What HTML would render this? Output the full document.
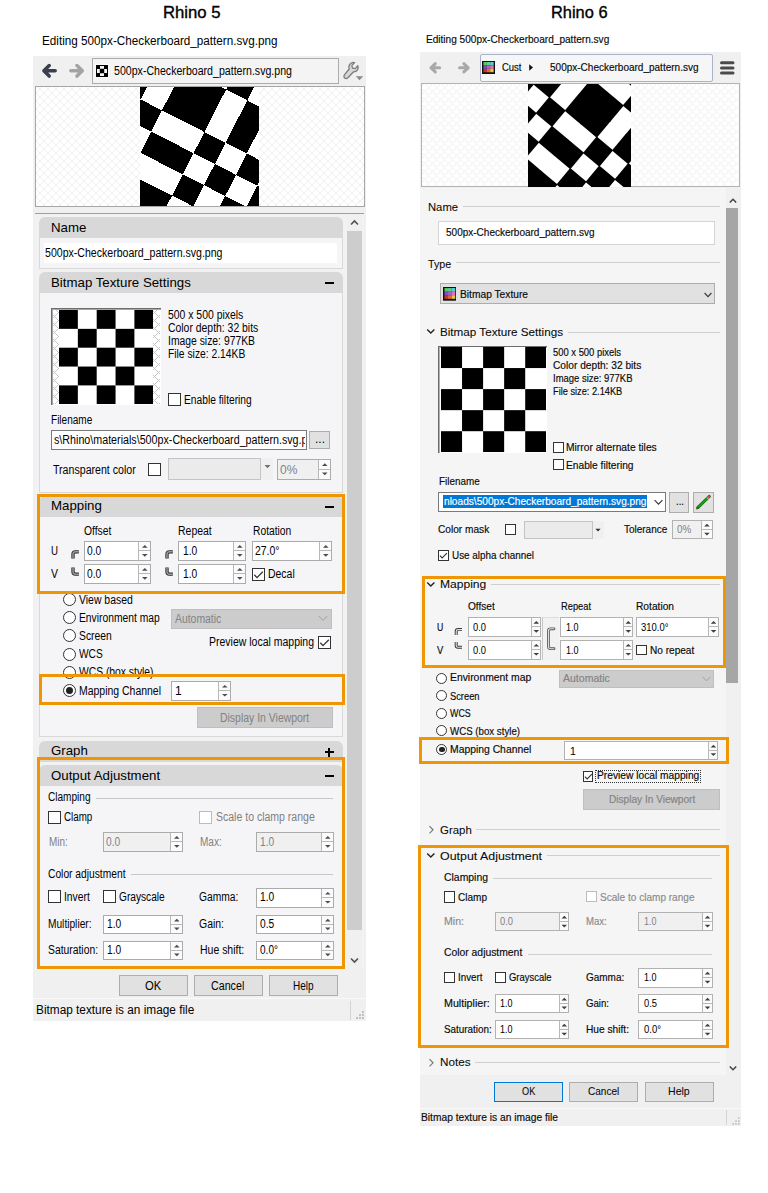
<!DOCTYPE html>
<html lang="en"><head><meta charset="utf-8"><title>Rhino 5 vs Rhino 6 texture mapping</title>
<style>
html,body{margin:0;padding:0;background:#fff}
#page{position:relative;width:768px;height:1193px;overflow:hidden;background:#fff;font-family:"Liberation Sans",sans-serif;color:#000}
.b{position:absolute;display:block}
.t{position:absolute;white-space:nowrap;line-height:1;transform-origin:0 0;display:block}
</style></head>
<body>
<div id="page">
<span class="t" style="left:163px;top:5px;font-size:16px;transform:scaleX(1.0426);-webkit-text-stroke:0.35px #000;">Rhino 5</span>
<span class="t" style="left:42px;top:35px;font-size:12px;transform:scaleX(0.9752);">Editing 500px-Checkerboard_pattern.svg.png</span>
<div class="b" style="left:33px;top:56px;width:333px;height:965px;background:#f0f0f0;"></div>
<div class="b" style="left:92px;top:58px;width:247px;height:26px;background:#f4f4f4;border:1px solid #ababab;box-sizing:border-box;"></div>
<svg class="b" style="left:41px;top:62px;" width="18" height="18" viewBox="0 0 18 18"><path d="M14.2 8.85H3.4M8.2 3.6L2.9 8.85L8.2 14.1" fill="none" stroke="#3b3f4c" stroke-width="3.5" stroke-linecap="round" stroke-linejoin="round"/></svg>
<svg class="b" style="left:68px;top:62px;" width="18" height="18" viewBox="0 0 18 18"><path d="M2.85 8.85H13.6M8.95 3.6L14.25 8.85L8.95 14.1" fill="none" stroke="#a3a3a3" stroke-width="3.5" stroke-linecap="round" stroke-linejoin="round"/></svg>
<svg class="b" style="left:95px;top:64px;" width="14" height="14" viewBox="0 0 14 14"><rect width="14" height="14" fill="#fbfbfb"/><rect x="1" y="1" width="12" height="12" fill="#000"/><path d="M5 2h4v2.8h-4zM2 5h2.8v4h-2.8zM9.2 5h2.8v4h-2.8zM5 9.2h4v2.8h-4z" fill="#f4f4f4"/></svg>
<span class="t" style="left:114px;top:65px;font-size:12px;transform:scaleX(0.8835);">500px-Checkerboard_pattern.svg.png</span>
<svg class="b" style="left:341px;top:60px;" width="24" height="22" viewBox="0 0 24 22"><path d="M3.2 15.2 L8.2 9.0 C7.2 6.0 8.6 3.2 12.0 2.4 L13.6 2.6 L10.8 5.6 L11.6 8.2 L14.2 8.6 L16.8 5.8 C18.0 8.6 16.2 11.6 12.6 11.8 L6.6 18.0 C4.6 19.4 2.0 17.4 3.2 15.2Z" fill="#d8d8d8" stroke="#7c7c7c" stroke-width="1.3" stroke-linejoin="round"/><path d="M14.8 16.2h7.4l-3.7 4z" fill="#8a8a8a"/></svg>
<div class="b" style="left:35px;top:86px;width:329.5px;height:121px;background:#fff;border:1px solid #a6a6a6;box-sizing:border-box;"></div>
<div class="b" style="left:36px;top:87px;width:327.5px;height:119px;background:repeating-linear-gradient(45deg,#efefef 0,#efefef 0.75px,transparent 0.75px,transparent 5.657px),repeating-linear-gradient(-45deg,#efefef 0,#efefef 0.75px,transparent 0.75px,transparent 5.657px),#fff;"></div>
<svg class="b" style="left:140px;top:87px;overflow:hidden;" width="119" height="119" viewBox="0 0 119 119"><rect width="119" height="119" fill="#fff"/><g transform="translate(0 119) rotate(27)" shape-rendering="crispEdges"><rect x="-71.4" y="-119" width="23.8" height="23.8"/><rect x="-47.6" y="-95.2" width="23.8" height="23.8"/><rect x="-47.6" y="-47.6" width="23.8" height="23.8"/><rect x="-23.8" y="-142.8" width="23.8" height="23.8"/><rect x="-23.8" y="-119" width="23.8" height="23.8"/><rect x="-23.8" y="-71.4" width="23.8" height="23.8"/><rect x="-23.8" y="-23.8" width="23.8" height="23.8"/><rect x="-23.8" y="0" width="23.8" height="23.8"/><rect x="0" y="-142.8" width="23.8" height="23.8"/><rect x="0" y="-119" width="23.8" height="23.8"/><rect x="0" y="-71.4" width="23.8" height="23.8"/><rect x="0" y="-23.8" width="23.8" height="23.8"/><rect x="0" y="0" width="23.8" height="23.8"/><rect x="23.8" y="-166.6" width="23.8" height="23.8"/><rect x="23.8" y="-95.2" width="23.8" height="23.8"/><rect x="23.8" y="-47.6" width="23.8" height="23.8"/><rect x="47.6" y="-190.4" width="23.8" height="23.8"/><rect x="47.6" y="-142.8" width="23.8" height="23.8"/><rect x="47.6" y="-119" width="23.8" height="23.8"/><rect x="47.6" y="-71.4" width="23.8" height="23.8"/><rect x="71.4" y="-95.2" width="23.8" height="23.8"/><rect x="71.4" y="-47.6" width="23.8" height="23.8"/><rect x="95.2" y="-71.4" width="23.8" height="23.8"/></g></svg>
<div class="b" style="left:35px;top:213px;width:329px;height:1px;background:#a0a0a0;"></div>
<div class="b" style="left:35px;top:214px;width:329px;height:755px;background:#f2f2f2;"></div>
<div class="b" style="left:347px;top:214px;width:15px;height:755px;background:#f0f0f0;"></div>
<div class="b" style="left:347px;top:231px;width:15px;height:698.5px;background:#cdcdcd;"></div>
<svg class="b" style="left:350px;top:219px;" width="9" height="7" viewBox="0 0 9 7"><path d="M1 5.5L4.5 2L8 5.5" fill="none" stroke="#505050" stroke-width="1.6"/></svg>
<svg class="b" style="left:350px;top:957px;" width="9" height="7" viewBox="0 0 9 7"><path d="M1 1.5L4.5 5L8 1.5" fill="none" stroke="#505050" stroke-width="1.6"/></svg>
<div class="b" style="left:39px;top:217px;width:304px;height:21px;background:#d8d8d8;border-radius:6px 6px 0 0;"></div>
<div class="b" style="left:39px;top:238px;width:304px;height:30.5px;background:#f5f5f8;border:1px solid #d9d9d9;border-top:none;box-sizing:border-box;"></div>
<span class="t" style="left:50.5px;top:221px;font-size:13px;transform:scaleX(1.0200);">Name</span>
<div class="b" style="left:44px;top:243px;width:293px;height:19.5px;background:#fff;"></div>
<span class="t" style="left:44.5px;top:247px;font-size:12px;transform:scaleX(0.8810);">500px-Checkerboard_pattern.svg.png</span>
<div class="b" style="left:39px;top:272px;width:304px;height:21px;background:#d8d8d8;border-radius:6px 6px 0 0;"></div>
<div class="b" style="left:39px;top:293px;width:304px;height:199.5px;background:#f5f5f8;border:1px solid #d9d9d9;border-top:none;box-sizing:border-box;"></div>
<span class="t" style="left:50.5px;top:276px;font-size:13px;transform:scaleX(1.0200);">Bitmap Texture Settings</span>
<div class="b" style="left:324.5px;top:282px;width:9.5px;height:2.2px;background:#000;"></div>
<div class="b" style="left:51px;top:308px;width:110px;height:97px;background:#fff;border-left:1px solid #6d6d6d;border-top:1px solid #6d6d6d;box-sizing:border-box;"></div>
<div class="b" style="left:52px;top:309px;width:109px;height:96px;background:#fff;border-left:1px solid #a8a8a8;border-top:1px solid #a8a8a8;box-sizing:border-box;"></div>
<div class="b" style="left:53px;top:310px;width:107px;height:94px;background:repeating-linear-gradient(45deg,#c8c8c8 0,#c8c8c8 0.9px,transparent 0.9px,transparent 5.657px),repeating-linear-gradient(-45deg,#c8c8c8 0,#c8c8c8 0.9px,transparent 0.9px,transparent 5.657px),#fff;"></div>
<svg class="b" style="left:59px;top:310px;" width="94.25" height="94.25" viewBox="0 0 94.25 94.25"><rect width="94.25" height="94.25" fill="#fff"/><rect x="0" y="0" width="18.85" height="18.85"/><rect x="0" y="37.7" width="18.85" height="18.85"/><rect x="0" y="75.4" width="18.85" height="18.85"/><rect x="18.85" y="18.85" width="18.85" height="18.85"/><rect x="18.85" y="56.55" width="18.85" height="18.85"/><rect x="37.7" y="0" width="18.85" height="18.85"/><rect x="37.7" y="37.7" width="18.85" height="18.85"/><rect x="37.7" y="75.4" width="18.85" height="18.85"/><rect x="56.55" y="18.85" width="18.85" height="18.85"/><rect x="56.55" y="56.55" width="18.85" height="18.85"/><rect x="75.4" y="0" width="18.85" height="18.85"/><rect x="75.4" y="37.7" width="18.85" height="18.85"/><rect x="75.4" y="75.4" width="18.85" height="18.85"/></svg>
<span class="t" style="left:168px;top:309px;font-size:12px;transform:scaleX(0.8677);">500 x 500 pixels</span>
<span class="t" style="left:168px;top:322px;font-size:12px;transform:scaleX(0.8673);">Color depth: 32 bits</span>
<span class="t" style="left:168px;top:335px;font-size:12px;transform:scaleX(0.8637);">Image size: 977KB</span>
<span class="t" style="left:168px;top:348px;font-size:12px;transform:scaleX(0.8579);">File size: 2.14KB</span>
<div class="b" style="left:168px;top:393px;width:13px;height:13px;background:#fff;border:1px solid #333;box-sizing:border-box;"></div>
<span class="t" style="left:184.25px;top:394px;font-size:12px;transform:scaleX(0.8534);">Enable filtering</span>
<span class="t" style="left:51.25px;top:414px;font-size:12px;transform:scaleX(0.8358);">Filename</span>
<div class="b" style="left:50.5px;top:430px;width:256.5px;height:19.5px;background:#fff;border:1px solid #7a7a7a;box-sizing:border-box;"></div>
<div class="b" style="left:51.5px;top:431px;width:253.2px;height:17.5px;overflow:hidden">
<span class="t" style="left:2.25px;top:3px;font-size:12px;transform:scaleX(0.8920);">s\Rhino\materials\500px-Checkerboard_pattern.svg.png</span>
</div>
<div class="b" style="left:309px;top:431px;width:21px;height:17.5px;background:#e1e1e1;border:1px solid #adadad;box-sizing:border-box;"></div>
<span class="t" style="left:315px;top:433px;font-size:12px;">...</span>
<span class="t" style="left:53.25px;top:464px;font-size:12px;transform:scaleX(0.8841);">Transparent color</span>
<div class="b" style="left:147.5px;top:463px;width:13px;height:13px;background:#fff;border:1px solid #333;box-sizing:border-box;"></div>
<div class="b" style="left:167.5px;top:458px;width:105px;height:21.5px;background:#f0f0f0;"></div>
<div class="b" style="left:167.5px;top:458px;width:93.5px;height:21.5px;background:#ebebeb;border:1px solid #c4c4c4;box-sizing:border-box;"></div>
<svg class="b" style="left:263.5px;top:464px;" width="7" height="5" viewBox="0 0 7 5"><path d="M0.5 1h6l-3 3.2z" fill="#707070"/></svg>
<div class="b" style="left:277px;top:459px;width:54px;height:20.5px;background:#f0f0f0;border:1px solid #ababab;box-sizing:border-box;"></div>
<div class="b" style="left:318px;top:460px;width:12px;height:18.5px;background:#fbfbfb;border-left:1px solid #b8b8b8;box-sizing:border-box;"></div>
<div class="b" style="left:319px;top:468.75px;width:11px;height:1px;background:#b8b8b8;"></div>
<svg class="b" style="left:318px;top:459px;" width="13" height="20.5" viewBox="0 0 13 20.5"><path d="M4 6.885 L6.8 4.185 L9.6 6.885Z M4 13.615 L6.8 16.315 L9.6 13.615Z" fill="#4c4c4c"/></svg>
<span class="t" style="left:280px;top:464px;font-size:12px;color:#80808c;">0%</span>
<div class="b" style="left:39px;top:496px;width:304px;height:21px;background:#d8d8d8;border-radius:6px 6px 0 0;"></div>
<div class="b" style="left:39px;top:517px;width:304px;height:220px;background:#f5f5f8;border:1px solid #d9d9d9;border-top:none;box-sizing:border-box;"></div>
<span class="t" style="left:50.5px;top:499px;font-size:13px;transform:scaleX(1.0200);">Mapping</span>
<div class="b" style="left:324.5px;top:506px;width:9.5px;height:2.2px;background:#000;"></div>
<span class="t" style="left:84.25px;top:525px;font-size:12px;transform:scaleX(0.8571);">Offset</span>
<span class="t" style="left:178.25px;top:525px;font-size:12px;transform:scaleX(0.8722);">Repeat</span>
<span class="t" style="left:252.5px;top:525px;font-size:12px;transform:scaleX(0.8558);">Rotation</span>
<span class="t" style="left:50.5px;top:545px;font-size:12px;transform:scaleX(0.8077);">U</span>
<span class="t" style="left:50.5px;top:568px;font-size:12px;transform:scaleX(0.8745);">V</span>
<svg class="b" style="left:71px;top:550px;" width="9" height="9" viewBox="0 0 9 9"><path d="M2 8.5V4.2Q2 1.8 4.4 1.8H7.8" fill="none" stroke="#2a2a2a" stroke-width="3.3"/><path d="M2 8.5V4.2Q2 1.8 4.4 1.8H7.8" fill="none" stroke="#9a9a9a" stroke-width="1.5"/></svg>
<svg class="b" style="left:71px;top:567px;" width="9" height="9" viewBox="0 0 9 9"><path d="M2 0.5V4.8Q2 7.2 4.4 7.2H7.8" fill="none" stroke="#2a2a2a" stroke-width="3.3"/><path d="M2 0.5V4.8Q2 7.2 4.4 7.2H7.8" fill="none" stroke="#9a9a9a" stroke-width="1.5"/></svg>
<svg class="b" style="left:165px;top:550px;" width="9" height="9" viewBox="0 0 9 9"><path d="M2 8.5V4.2Q2 1.8 4.4 1.8H7.8" fill="none" stroke="#2a2a2a" stroke-width="3.3"/><path d="M2 8.5V4.2Q2 1.8 4.4 1.8H7.8" fill="none" stroke="#9a9a9a" stroke-width="1.5"/></svg>
<svg class="b" style="left:165px;top:567px;" width="9" height="9" viewBox="0 0 9 9"><path d="M2 0.5V4.8Q2 7.2 4.4 7.2H7.8" fill="none" stroke="#2a2a2a" stroke-width="3.3"/><path d="M2 0.5V4.8Q2 7.2 4.4 7.2H7.8" fill="none" stroke="#9a9a9a" stroke-width="1.5"/></svg>
<div class="b" style="left:84px;top:541px;width:67px;height:19.75px;background:#fff;border:1px solid #ababab;box-sizing:border-box;"></div>
<div class="b" style="left:138px;top:542px;width:12px;height:17.75px;background:#fbfbfb;border-left:1px solid #b8b8b8;box-sizing:border-box;"></div>
<div class="b" style="left:139px;top:550.375px;width:11px;height:1px;background:#b8b8b8;"></div>
<svg class="b" style="left:138px;top:541px;" width="13" height="19.75" viewBox="0 0 13 19.75"><path d="M4 6.6825 L6.8 3.9825 L9.6 6.6825Z M4 13.0675 L6.8 15.7675 L9.6 13.0675Z" fill="#4c4c4c"/></svg>
<span class="t" style="left:87px;top:545px;font-size:12px;transform:scaleX(0.8512);">0.0</span>
<div class="b" style="left:84px;top:564px;width:67px;height:19.75px;background:#fff;border:1px solid #ababab;box-sizing:border-box;"></div>
<div class="b" style="left:138px;top:565px;width:12px;height:17.75px;background:#fbfbfb;border-left:1px solid #b8b8b8;box-sizing:border-box;"></div>
<div class="b" style="left:139px;top:573.375px;width:11px;height:1px;background:#b8b8b8;"></div>
<svg class="b" style="left:138px;top:564px;" width="13" height="19.75" viewBox="0 0 13 19.75"><path d="M4 6.6825 L6.8 3.9825 L9.6 6.6825Z M4 13.0675 L6.8 15.7675 L9.6 13.0675Z" fill="#4c4c4c"/></svg>
<span class="t" style="left:87px;top:568px;font-size:12px;transform:scaleX(0.8512);">0.0</span>
<div class="b" style="left:178px;top:541px;width:67.5px;height:19.75px;background:#fff;border:1px solid #ababab;box-sizing:border-box;"></div>
<div class="b" style="left:232.5px;top:542px;width:12px;height:17.75px;background:#fbfbfb;border-left:1px solid #b8b8b8;box-sizing:border-box;"></div>
<div class="b" style="left:233.5px;top:550.375px;width:11px;height:1px;background:#b8b8b8;"></div>
<svg class="b" style="left:232.5px;top:541px;" width="13" height="19.75" viewBox="0 0 13 19.75"><path d="M4 6.6825 L6.8 3.9825 L9.6 6.6825Z M4 13.0675 L6.8 15.7675 L9.6 13.0675Z" fill="#4c4c4c"/></svg>
<span class="t" style="left:182.5px;top:545px;font-size:12px;transform:scaleX(0.8512);">1.0</span>
<div class="b" style="left:178px;top:564px;width:67.5px;height:19.75px;background:#fff;border:1px solid #ababab;box-sizing:border-box;"></div>
<div class="b" style="left:232.5px;top:565px;width:12px;height:17.75px;background:#fbfbfb;border-left:1px solid #b8b8b8;box-sizing:border-box;"></div>
<div class="b" style="left:233.5px;top:573.375px;width:11px;height:1px;background:#b8b8b8;"></div>
<svg class="b" style="left:232.5px;top:564px;" width="13" height="19.75" viewBox="0 0 13 19.75"><path d="M4 6.6825 L6.8 3.9825 L9.6 6.6825Z M4 13.0675 L6.8 15.7675 L9.6 13.0675Z" fill="#4c4c4c"/></svg>
<span class="t" style="left:182.5px;top:568px;font-size:12px;transform:scaleX(0.8512);">1.0</span>
<div class="b" style="left:252px;top:541px;width:80px;height:19.75px;background:#fff;border:1px solid #ababab;box-sizing:border-box;"></div>
<div class="b" style="left:319px;top:542px;width:12px;height:17.75px;background:#fbfbfb;border-left:1px solid #b8b8b8;box-sizing:border-box;"></div>
<div class="b" style="left:320px;top:550.375px;width:11px;height:1px;background:#b8b8b8;"></div>
<svg class="b" style="left:319px;top:541px;" width="13" height="19.75" viewBox="0 0 13 19.75"><path d="M4 6.6825 L6.8 3.9825 L9.6 6.6825Z M4 13.0675 L6.8 15.7675 L9.6 13.0675Z" fill="#4c4c4c"/></svg>
<span class="t" style="left:255px;top:545px;font-size:12px;transform:scaleX(0.8702);">27.0°</span>
<div class="b" style="left:252px;top:568px;width:13px;height:13px;background:#fff;border:1px solid #333;box-sizing:border-box;"></div>
<svg class="b" style="left:252px;top:568px;" width="13" height="13" viewBox="0 0 13 13"><path d="M2.3 6.8 L5 9.6 L10.8 3.7" fill="none" stroke="#333" stroke-width="1.3"/></svg>
<span class="t" style="left:268.25px;top:568px;font-size:12px;transform:scaleX(0.8719);">Decal</span>
<div class="b" style="left:62.75px;top:593px;width:13px;height:13px;background:#fff;border:1px solid #333;border-radius:50%;box-sizing:border-box;"></div>
<span class="t" style="left:79.25px;top:594px;font-size:12px;transform:scaleX(0.8694);">View based</span>
<div class="b" style="left:62.75px;top:611px;width:13px;height:13px;background:#fff;border:1px solid #333;border-radius:50%;box-sizing:border-box;"></div>
<span class="t" style="left:79.25px;top:612px;font-size:12px;transform:scaleX(0.8586);">Environment map</span>
<div class="b" style="left:62.75px;top:629.25px;width:13px;height:13px;background:#fff;border:1px solid #333;border-radius:50%;box-sizing:border-box;"></div>
<span class="t" style="left:79.25px;top:630px;font-size:12px;transform:scaleX(0.8613);">Screen</span>
<div class="b" style="left:62.75px;top:647.75px;width:13px;height:13px;background:#fff;border:1px solid #333;border-radius:50%;box-sizing:border-box;"></div>
<span class="t" style="left:79.25px;top:648px;font-size:12px;transform:scaleX(0.8483);">WCS</span>
<div class="b" style="left:62.75px;top:665.5px;width:13px;height:13px;background:#fff;border:1px solid #333;border-radius:50%;box-sizing:border-box;"></div>
<span class="t" style="left:79.25px;top:666px;font-size:12px;transform:scaleX(0.8595);">WCS (box style)</span>
<div class="b" style="left:62.75px;top:684px;width:13px;height:13px;background:#fff;border:1px solid #333;border-radius:50%;box-sizing:border-box;"></div>
<div class="b" style="left:65.74px;top:686.99px;width:7.02px;height:7.02px;background:#222;border-radius:50%;"></div>
<span class="t" style="left:79.25px;top:685px;font-size:12px;transform:scaleX(0.8717);">Mapping Channel</span>
<div class="b" style="left:170.5px;top:608.5px;width:161.5px;height:20.5px;background:#cccccc;border:1px solid #bfbfbf;box-sizing:border-box;"></div>
<span class="t" style="left:175px;top:613px;font-size:12px;color:#838383;transform:scaleX(0.8668);">Automatic</span>
<svg class="b" style="left:318px;top:615px;" width="10" height="7" viewBox="0 0 10 7"><path d="M0.8 1L5 5.4L9.2 1" fill="none" stroke="#a0a0a0" stroke-width="1"/></svg>
<span class="t" style="left:209.25px;top:636px;font-size:12px;transform:scaleX(0.8745);">Preview local mapping</span>
<div class="b" style="left:318px;top:636px;width:13px;height:13px;background:#fff;border:1px solid #333;box-sizing:border-box;"></div>
<svg class="b" style="left:318px;top:636px;" width="13" height="13" viewBox="0 0 13 13"><path d="M2.3 6.8 L5 9.6 L10.8 3.7" fill="none" stroke="#333" stroke-width="1.3"/></svg>
<div class="b" style="left:170.5px;top:681px;width:60.5px;height:19.5px;background:#fff;border:1px solid #ababab;box-sizing:border-box;"></div>
<div class="b" style="left:218px;top:682px;width:12px;height:17.5px;background:#fbfbfb;border-left:1px solid #b8b8b8;box-sizing:border-box;"></div>
<div class="b" style="left:219px;top:690.25px;width:11px;height:1px;background:#b8b8b8;"></div>
<svg class="b" style="left:218px;top:681px;" width="13" height="19.5" viewBox="0 0 13 19.5"><path d="M4 6.615 L6.8 3.915 L9.6 6.615Z M4 12.885 L6.8 15.585 L9.6 12.885Z" fill="#4c4c4c"/></svg>
<span class="t" style="left:175px;top:685px;font-size:12px;">1</span>
<div class="b" style="left:197px;top:707.25px;width:136px;height:20.25px;background:#cccccc;border:1px solid #bfbfbf;box-sizing:border-box;"></div>
<span class="t" style="left:220px;top:712px;font-size:12px;color:#838383;transform:scaleX(0.8708);">Display In Viewport</span>
<div class="b" style="left:39px;top:741px;width:304px;height:21px;background:#d8d8d8;border-radius:6px 6px 0 0;"></div>
<span class="t" style="left:50.5px;top:744px;font-size:13px;transform:scaleX(1.0200);">Graph</span>
<div class="b" style="left:324.5px;top:751px;width:9.5px;height:2.2px;background:#000;"></div>
<div class="b" style="left:328.2px;top:747.5px;width:2.2px;height:9.5px;background:#000;"></div>
<div class="b" style="left:39px;top:764.5px;width:304px;height:21.5px;background:#d8d8d8;border-radius:6px 6px 0 0;"></div>
<div class="b" style="left:39px;top:786px;width:304px;height:182px;background:#f5f5f8;border:1px solid #d9d9d9;border-top:none;box-sizing:border-box;"></div>
<span class="t" style="left:50.5px;top:769px;font-size:13px;transform:scaleX(1.0200);">Output Adjustment</span>
<div class="b" style="left:324.5px;top:774.75px;width:9.5px;height:2.2px;background:#000;"></div>
<span class="t" style="left:47.5px;top:791px;font-size:12px;transform:scaleX(0.8384);">Clamping</span>
<div class="b" style="left:96.25px;top:797.5px;width:236.25px;height:1px;background:#c8c8c8;"></div>
<div class="b" style="left:48px;top:810.5px;width:13px;height:13px;background:#fff;border:1px solid #333;box-sizing:border-box;"></div>
<span class="t" style="left:63.75px;top:811px;font-size:12px;transform:scaleX(0.8147);">Clamp</span>
<div class="b" style="left:199px;top:810.5px;width:13px;height:13px;background:#fff;border:1px solid #bcbcbc;box-sizing:border-box;"></div>
<span class="t" style="left:215.5px;top:811px;font-size:12px;color:#808080;transform:scaleX(0.8760);">Scale to clamp range</span>
<span class="t" style="left:48.75px;top:836px;font-size:12px;color:#808080;transform:scaleX(0.8271);">Min:</span>
<div class="b" style="left:103px;top:832px;width:80px;height:19.75px;background:#f0f0f0;border:1px solid #ababab;box-sizing:border-box;"></div>
<div class="b" style="left:170px;top:833px;width:12px;height:17.75px;background:#fbfbfb;border-left:1px solid #b8b8b8;box-sizing:border-box;"></div>
<div class="b" style="left:171px;top:841.375px;width:11px;height:1px;background:#b8b8b8;"></div>
<svg class="b" style="left:170px;top:832px;" width="13" height="19.75" viewBox="0 0 13 19.75"><path d="M4 6.6825 L6.8 3.9825 L9.6 6.6825Z M4 13.0675 L6.8 15.7675 L9.6 13.0675Z" fill="#4c4c4c"/></svg>
<span class="t" style="left:106px;top:836px;font-size:12px;color:#80808c;transform:scaleX(0.8512);">0.0</span>
<span class="t" style="left:199.5px;top:836px;font-size:12px;color:#808080;transform:scaleX(0.8364);">Max:</span>
<div class="b" style="left:256px;top:832px;width:78px;height:19.75px;background:#f0f0f0;border:1px solid #ababab;box-sizing:border-box;"></div>
<div class="b" style="left:321px;top:833px;width:12px;height:17.75px;background:#fbfbfb;border-left:1px solid #b8b8b8;box-sizing:border-box;"></div>
<div class="b" style="left:322px;top:841.375px;width:11px;height:1px;background:#b8b8b8;"></div>
<svg class="b" style="left:321px;top:832px;" width="13" height="19.75" viewBox="0 0 13 19.75"><path d="M4 6.6825 L6.8 3.9825 L9.6 6.6825Z M4 13.0675 L6.8 15.7675 L9.6 13.0675Z" fill="#4c4c4c"/></svg>
<span class="t" style="left:259.5px;top:836px;font-size:12px;color:#80808c;transform:scaleX(0.8512);">1.0</span>
<span class="t" style="left:47.5px;top:868px;font-size:12px;transform:scaleX(0.8544);">Color adjustment</span>
<div class="b" style="left:131.25px;top:874px;width:201.25px;height:1px;background:#c8c8c8;"></div>
<div class="b" style="left:48px;top:890px;width:13px;height:13px;background:#fff;border:1px solid #333;box-sizing:border-box;"></div>
<span class="t" style="left:64.25px;top:891px;font-size:12px;transform:scaleX(0.8580);">Invert</span>
<div class="b" style="left:103px;top:890px;width:13px;height:13px;background:#fff;border:1px solid #333;box-sizing:border-box;"></div>
<span class="t" style="left:119.25px;top:891px;font-size:12px;transform:scaleX(0.8469);">Grayscale</span>
<span class="t" style="left:198.75px;top:891px;font-size:12px;transform:scaleX(0.8531);">Gamma:</span>
<div class="b" style="left:256px;top:888px;width:78px;height:19.5px;background:#fff;border:1px solid #ababab;box-sizing:border-box;"></div>
<div class="b" style="left:321px;top:889px;width:12px;height:17.5px;background:#fbfbfb;border-left:1px solid #b8b8b8;box-sizing:border-box;"></div>
<div class="b" style="left:322px;top:897.25px;width:11px;height:1px;background:#b8b8b8;"></div>
<svg class="b" style="left:321px;top:888px;" width="13" height="19.5" viewBox="0 0 13 19.5"><path d="M4 6.615 L6.8 3.915 L9.6 6.615Z M4 12.885 L6.8 15.585 L9.6 12.885Z" fill="#4c4c4c"/></svg>
<span class="t" style="left:259.5px;top:891px;font-size:12px;transform:scaleX(0.8512);">1.0</span>
<span class="t" style="left:48.25px;top:918px;font-size:12px;transform:scaleX(0.8472);">Multiplier:</span>
<div class="b" style="left:103px;top:914.5px;width:80px;height:19px;background:#fff;border:1px solid #ababab;box-sizing:border-box;"></div>
<div class="b" style="left:170px;top:915.5px;width:12px;height:17px;background:#fbfbfb;border-left:1px solid #b8b8b8;box-sizing:border-box;"></div>
<div class="b" style="left:171px;top:923.5px;width:11px;height:1px;background:#b8b8b8;"></div>
<svg class="b" style="left:170px;top:914.5px;" width="13" height="19" viewBox="0 0 13 19"><path d="M4 6.48 L6.8 3.78 L9.6 6.48Z M4 12.52 L6.8 15.22 L9.6 12.52Z" fill="#4c4c4c"/></svg>
<span class="t" style="left:106.5px;top:918px;font-size:12px;transform:scaleX(0.8512);">1.0</span>
<span class="t" style="left:198.75px;top:918px;font-size:12px;transform:scaleX(0.8716);">Gain:</span>
<div class="b" style="left:256px;top:914.5px;width:78px;height:19px;background:#fff;border:1px solid #ababab;box-sizing:border-box;"></div>
<div class="b" style="left:321px;top:915.5px;width:12px;height:17px;background:#fbfbfb;border-left:1px solid #b8b8b8;box-sizing:border-box;"></div>
<div class="b" style="left:322px;top:923.5px;width:11px;height:1px;background:#b8b8b8;"></div>
<svg class="b" style="left:321px;top:914.5px;" width="13" height="19" viewBox="0 0 13 19"><path d="M4 6.48 L6.8 3.78 L9.6 6.48Z M4 12.52 L6.8 15.22 L9.6 12.52Z" fill="#4c4c4c"/></svg>
<span class="t" style="left:259.5px;top:918px;font-size:12px;transform:scaleX(0.8512);">0.5</span>
<span class="t" style="left:48.25px;top:944px;font-size:12px;transform:scaleX(0.8615);">Saturation:</span>
<div class="b" style="left:103px;top:940.5px;width:80px;height:19px;background:#fff;border:1px solid #ababab;box-sizing:border-box;"></div>
<div class="b" style="left:170px;top:941.5px;width:12px;height:17px;background:#fbfbfb;border-left:1px solid #b8b8b8;box-sizing:border-box;"></div>
<div class="b" style="left:171px;top:949.5px;width:11px;height:1px;background:#b8b8b8;"></div>
<svg class="b" style="left:170px;top:940.5px;" width="13" height="19" viewBox="0 0 13 19"><path d="M4 6.48 L6.8 3.78 L9.6 6.48Z M4 12.52 L6.8 15.22 L9.6 12.52Z" fill="#4c4c4c"/></svg>
<span class="t" style="left:106.5px;top:944px;font-size:12px;transform:scaleX(0.8512);">1.0</span>
<span class="t" style="left:199.5px;top:944px;font-size:12px;transform:scaleX(0.8730);">Hue shift:</span>
<div class="b" style="left:256px;top:940.5px;width:78px;height:19px;background:#fff;border:1px solid #ababab;box-sizing:border-box;"></div>
<div class="b" style="left:321px;top:941.5px;width:12px;height:17px;background:#fbfbfb;border-left:1px solid #b8b8b8;box-sizing:border-box;"></div>
<div class="b" style="left:322px;top:949.5px;width:11px;height:1px;background:#b8b8b8;"></div>
<svg class="b" style="left:321px;top:940.5px;" width="13" height="19" viewBox="0 0 13 19"><path d="M4 6.48 L6.8 3.78 L9.6 6.48Z M4 12.52 L6.8 15.22 L9.6 12.52Z" fill="#4c4c4c"/></svg>
<span class="t" style="left:259.5px;top:944px;font-size:12px;transform:scaleX(0.8380);">0.0°</span>
<div class="b" style="left:37px;top:494.25px;width:308px;height:99.5px;border:3px solid #ef9605;box-sizing:border-box;"></div>
<div class="b" style="left:39px;top:674px;width:306px;height:31px;border:3px solid #ef9605;box-sizing:border-box;"></div>
<div class="b" style="left:37px;top:757px;width:308px;height:212px;border:3px solid #ef9605;box-sizing:border-box;"></div>
<div class="b" style="left:119px;top:975px;width:68.5px;height:20.5px;background:#e1e1e1;border:1px solid #adadad;box-sizing:border-box;"></div>
<span class="t" style="left:145px;top:980px;font-size:12px;transform:scaleX(0.9372);">OK</span>
<div class="b" style="left:194px;top:975px;width:68.5px;height:20.5px;background:#e1e1e1;border:1px solid #adadad;box-sizing:border-box;"></div>
<span class="t" style="left:211.25px;top:980px;font-size:12px;transform:scaleX(0.8901);">Cancel</span>
<div class="b" style="left:269px;top:975px;width:69px;height:20.5px;background:#e1e1e1;border:1px solid #adadad;box-sizing:border-box;"></div>
<span class="t" style="left:292.5px;top:980px;font-size:12px;transform:scaleX(0.8306);">Help</span>
<div class="b" style="left:33px;top:998px;width:333px;height:1px;background:#fafafa;"></div>
<span class="t" style="left:35.5px;top:1004px;font-size:12px;transform:scaleX(0.9845);">Bitmap texture is an image file</span>
<div class="b" style="left:349.5px;top:1000.5px;width:1px;height:19px;background:#d4d4d4;"></div>
<svg class="b" style="left:355px;top:1010px;" width="10" height="10" viewBox="0 0 10 10"><path d="M7 1h2v2h-2zM7 4h2v2h-2zM4 4h2v2h-2zM7 7h2v2h-2zM4 7h2v2h-2zM1 7h2v2h-2z" fill="#c0c0c0"/></svg>
<span class="t" style="left:551.25px;top:5px;font-size:16px;transform:scaleX(1.0245);-webkit-text-stroke:0.35px #000;">Rhino 6</span>
<span class="t" style="left:425.75px;top:34px;font-size:10.5px;color:#0a0a0a;transform:scaleX(0.9601);-webkit-text-stroke:0.16px #0a0a0a;">Editing 500px-Checkerboard_pattern.svg</span>
<div class="b" style="left:420px;top:52px;width:321px;height:1074px;background:#f0f0f0;"></div>
<div class="b" style="left:480px;top:54px;width:232.75px;height:27.5px;background:#f6f6f6;border:1px solid #aab4c8;border-radius:2px;box-sizing:border-box;"></div>
<svg class="b" style="left:429px;top:62px;" width="13" height="12" viewBox="0 0 13 12"><path d="M10.6 5.8H2.4M6.3 1.7L2 5.8L6.3 9.9" fill="none" stroke="#a8a8a8" stroke-width="3" stroke-linecap="round" stroke-linejoin="round"/></svg>
<svg class="b" style="left:457.5px;top:62px;" width="13" height="12" viewBox="0 0 13 12"><path d="M1.6 5.8H9.8M5.9 1.7L10.2 5.8L5.9 9.9" fill="none" stroke="#a8a8a8" stroke-width="3" stroke-linecap="round" stroke-linejoin="round"/></svg>
<svg class="b" style="left:482px;top:61.25px;" width="13" height="13" viewBox="0 0 13 13"><rect width="13" height="13" fill="#111"/><rect x="1.4" y="1" width="3.45" height="3.45" fill="#56cc5a"/><rect x="4.8" y="1" width="3.45" height="3.45" fill="#58d48c"/><rect x="8.2" y="1" width="3.45" height="3.45" fill="#5ccfd0"/><rect x="1.4" y="4.4" width="3.45" height="3.45" fill="#7a52c4"/><rect x="4.8" y="4.4" width="3.45" height="3.45" fill="#a85fd2"/><rect x="8.2" y="4.4" width="3.45" height="3.45" fill="#e272c2"/><rect x="1.4" y="7.8" width="3.45" height="3.45" fill="#cf2f2f"/><rect x="4.8" y="7.8" width="3.45" height="3.45" fill="#e06c2c"/><rect x="8.2" y="7.8" width="3.45" height="3.45" fill="#e8c63c"/></svg>
<span class="t" style="left:501.75px;top:62px;font-size:10.5px;color:#0a0a0a;transform:scaleX(0.9032);-webkit-text-stroke:0.16px #0a0a0a;">Cust</span>
<svg class="b" style="left:528.8px;top:64px;" width="4.2" height="7" viewBox="0 0 4.2 7"><path d="M0.2 0.2L4 3.5L0.2 6.8Z" fill="#111"/></svg>
<span class="t" style="left:550px;top:62px;font-size:10.5px;color:#0a0a0a;transform:scaleX(0.9528);-webkit-text-stroke:0.16px #0a0a0a;">500px-Checkerboard_pattern.svg</span>
<svg class="b" style="left:719px;top:60px;" width="17" height="16" viewBox="0 0 17 16"><path d="M2.5 2.75H14M2.5 7.9H14M2.5 13H14" stroke="#4a4a4a" stroke-width="3" stroke-linecap="round" fill="none"/></svg>
<div class="b" style="left:420.5px;top:83px;width:319.5px;height:104.25px;background:#fff;border:1px solid #b4b4b4;box-sizing:border-box;"></div>
<div class="b" style="left:421.5px;top:84px;width:317.5px;height:102.25px;background:repeating-linear-gradient(45deg,#efefef 0,#efefef 0.75px,transparent 0.75px,transparent 5.657px),repeating-linear-gradient(-45deg,#efefef 0,#efefef 0.75px,transparent 0.75px,transparent 5.657px),#fff;"></div>
<svg class="b" style="left:528px;top:84px;overflow:hidden;" width="103" height="103" viewBox="0 0 103 103"><rect width="103" height="103" fill="#fff"/><g transform="translate(0 103) rotate(310)"><rect x="-21" y="-21" width="21.4" height="21.4"/><rect x="-21" y="-0.4" width="21.4" height="21.4"/><rect x="-0.4" y="-21" width="21.4" height="21.4"/><rect x="-0.4" y="-0.4" width="21.4" height="21.4"/><rect x="20.2" y="-41.6" width="21.4" height="21.4"/><rect x="20.2" y="20.2" width="21.4" height="21.4"/><rect x="40.8" y="-62.2" width="21.4" height="21.4"/><rect x="40.8" y="-21" width="21.4" height="21.4"/><rect x="40.8" y="-0.4" width="21.4" height="21.4"/><rect x="40.8" y="40.8" width="21.4" height="21.4"/><rect x="61.4" y="-82.8" width="21.4" height="21.4"/><rect x="61.4" y="-41.6" width="21.4" height="21.4"/><rect x="61.4" y="20.2" width="21.4" height="21.4"/><rect x="61.4" y="61.4" width="21.4" height="21.4"/><rect x="82" y="-62.2" width="21.4" height="21.4"/><rect x="82" y="-21" width="21.4" height="21.4"/><rect x="82" y="-0.4" width="21.4" height="21.4"/><rect x="82" y="40.8" width="21.4" height="21.4"/><rect x="102.6" y="-21" width="21.4" height="21.4"/><rect x="102.6" y="-0.4" width="21.4" height="21.4"/><rect x="102.6" y="40.8" width="21.4" height="21.4"/><rect x="123.2" y="20.2" width="21.4" height="21.4"/><rect x="143.8" y="-0.4" width="21.4" height="21.4"/></g></svg>
<div class="b" style="left:420px;top:188px;width:306px;height:887px;background:#f5f5f5;"></div>
<div class="b" style="left:726px;top:188px;width:14.5px;height:887px;background:#f0f0f0;"></div>
<div class="b" style="left:726.25px;top:208px;width:12px;height:475px;background:#a6a6a6;"></div>
<svg class="b" style="left:728.5px;top:197px;" width="8" height="7" viewBox="0 0 8 7"><path d="M0.8 5.5L4 2.2L7.2 5.5" fill="none" stroke="#404040" stroke-width="1.4"/></svg>
<svg class="b" style="left:728.5px;top:1065px;" width="8" height="7" viewBox="0 0 8 7"><path d="M0.8 1.5L4 4.8L7.2 1.5" fill="none" stroke="#404040" stroke-width="1.4"/></svg>
<span class="t" style="left:428px;top:202px;font-size:11.5px;color:#0a0a0a;transform:scaleX(0.9779);-webkit-text-stroke:0.08px #0a0a0a;">Name</span>
<div class="b" style="left:462.5px;top:205.5px;width:257.75px;height:1px;background:#cfcfcf;"></div>
<div class="b" style="left:438.25px;top:220.75px;width:276.5px;height:23.75px;background:#fff;border:1px solid #d4d4d4;box-sizing:border-box;"></div>
<span class="t" style="left:445.75px;top:227px;font-size:10.5px;color:#0a0a0a;transform:scaleX(0.9528);-webkit-text-stroke:0.16px #0a0a0a;">500px-Checkerboard_pattern.svg</span>
<span class="t" style="left:428px;top:259px;font-size:11.5px;color:#0a0a0a;transform:scaleX(0.9325);-webkit-text-stroke:0.08px #0a0a0a;">Type</span>
<div class="b" style="left:455.75px;top:262.25px;width:264.5px;height:1px;background:#cfcfcf;"></div>
<div class="b" style="left:440px;top:283.25px;width:274.75px;height:20.5px;background:#e1e1e1;border:1px solid #adadad;box-sizing:border-box;"></div>
<svg class="b" style="left:442.8px;top:287px;" width="13.7" height="13.7" viewBox="0 0 13 13"><rect width="13" height="13" fill="#111"/><rect x="1.4" y="1" width="3.45" height="3.45" fill="#56cc5a"/><rect x="4.8" y="1" width="3.45" height="3.45" fill="#58d48c"/><rect x="8.2" y="1" width="3.45" height="3.45" fill="#5ccfd0"/><rect x="1.4" y="4.4" width="3.45" height="3.45" fill="#7a52c4"/><rect x="4.8" y="4.4" width="3.45" height="3.45" fill="#a85fd2"/><rect x="8.2" y="4.4" width="3.45" height="3.45" fill="#e272c2"/><rect x="1.4" y="7.8" width="3.45" height="3.45" fill="#cf2f2f"/><rect x="4.8" y="7.8" width="3.45" height="3.45" fill="#e06c2c"/><rect x="8.2" y="7.8" width="3.45" height="3.45" fill="#e8c63c"/></svg>
<span class="t" style="left:460px;top:289px;font-size:10.5px;color:#0a0a0a;transform:scaleX(0.9736);-webkit-text-stroke:0.16px #0a0a0a;">Bitmap Texture</span>
<svg class="b" style="left:703.5px;top:291.5px;" width="8" height="6" viewBox="0 0 8 6"><path d="M0.6 1L4 4.6L7.4 1" fill="none" stroke="#333" stroke-width="1.1"/></svg>
<svg class="b" style="left:425.6px;top:328px;" width="10" height="7" viewBox="0 0 10 7"><path d="M1.2 1.5L4.8 5L8.4 1.5" fill="none" stroke="#222" stroke-width="1.4"/></svg>
<span class="t" style="left:440px;top:327px;font-size:11.5px;color:#0a0a0a;transform:scaleX(1.0145);-webkit-text-stroke:0.08px #0a0a0a;">Bitmap Texture Settings</span>
<div class="b" style="left:567.5px;top:331.5px;width:152.5px;height:1px;background:#cfcfcf;"></div>
<div class="b" style="left:438px;top:345.5px;width:108.5px;height:107.5px;background:#fff;border-left:1px solid #6d6d6d;border-top:1px solid #6d6d6d;box-sizing:border-box;"></div>
<div class="b" style="left:439px;top:346.5px;width:107.5px;height:106.5px;background:#fff;border-left:1px solid #b0b0b0;border-top:1px solid #b0b0b0;box-sizing:border-box;"></div>
<svg class="b" style="left:440.5px;top:347px;" width="105.25" height="105.25" viewBox="0 0 105.25 105.25"><rect width="105.25" height="105.25" fill="#fff"/><rect x="0" y="0" width="21.05" height="21.05"/><rect x="0" y="42.1" width="21.05" height="21.05"/><rect x="0" y="84.2" width="21.05" height="21.05"/><rect x="21.05" y="21.05" width="21.05" height="21.05"/><rect x="21.05" y="63.15" width="21.05" height="21.05"/><rect x="42.1" y="0" width="21.05" height="21.05"/><rect x="42.1" y="42.1" width="21.05" height="21.05"/><rect x="42.1" y="84.2" width="21.05" height="21.05"/><rect x="63.15" y="21.05" width="21.05" height="21.05"/><rect x="63.15" y="63.15" width="21.05" height="21.05"/><rect x="84.2" y="0" width="21.05" height="21.05"/><rect x="84.2" y="42.1" width="21.05" height="21.05"/><rect x="84.2" y="84.2" width="21.05" height="21.05"/></svg>
<span class="t" style="left:552.5px;top:347px;font-size:10.5px;color:#0a0a0a;transform:scaleX(0.8961);-webkit-text-stroke:0.16px #0a0a0a;">500 x 500 pixels</span>
<span class="t" style="left:552.5px;top:360px;font-size:10.5px;color:#0a0a0a;transform:scaleX(0.9692);-webkit-text-stroke:0.16px #0a0a0a;">Color depth: 32 bits</span>
<span class="t" style="left:552.5px;top:373px;font-size:10.5px;color:#0a0a0a;transform:scaleX(0.9020);-webkit-text-stroke:0.16px #0a0a0a;">Image size: 977KB</span>
<span class="t" style="left:552.5px;top:386px;font-size:10.5px;color:#0a0a0a;transform:scaleX(0.8789);-webkit-text-stroke:0.16px #0a0a0a;">File size: 2.14KB</span>
<div class="b" style="left:553px;top:442.25px;width:11px;height:11px;background:#fff;border:1px solid #333;box-sizing:border-box;"></div>
<span class="t" style="left:566.25px;top:442px;font-size:10.5px;color:#0a0a0a;transform:scaleX(0.9781);-webkit-text-stroke:0.16px #0a0a0a;">Mirror alternate tiles</span>
<div class="b" style="left:553px;top:459.25px;width:11px;height:11px;background:#fff;border:1px solid #333;box-sizing:border-box;"></div>
<span class="t" style="left:566.25px;top:460px;font-size:10.5px;color:#0a0a0a;transform:scaleX(0.9717);-webkit-text-stroke:0.16px #0a0a0a;">Enable filtering</span>
<span class="t" style="left:438.75px;top:476px;font-size:10.5px;color:#0a0a0a;transform:scaleX(0.9436);-webkit-text-stroke:0.16px #0a0a0a;">Filename</span>
<div class="b" style="left:437.5px;top:492px;width:228.25px;height:19.5px;background:#fff;border:1px solid #7a7a7a;box-sizing:border-box;"></div>
<div class="b" style="left:442.5px;top:494.5px;width:204.5px;height:13.5px;background:#0078d7;"></div>
<span class="t" style="left:443.5px;top:496px;font-size:10.5px;color:#fff;transform:scaleX(0.9636);-webkit-text-stroke:0.16px #fff;">nloads\500px-Checkerboard_pattern.svg.png</span>
<svg class="b" style="left:654px;top:499px;" width="9" height="7" viewBox="0 0 9 7"><path d="M0.6 1.2L4.5 5.2L8.4 1.2" fill="none" stroke="#333" stroke-width="1.1"/></svg>
<div class="b" style="left:669px;top:492.25px;width:20.25px;height:20.25px;background:#e1e1e1;border:1px solid #adadad;box-sizing:border-box;"></div>
<span class="t" style="left:675.5px;top:496px;font-size:10.5px;color:#0a0a0a;transform:scaleX(0.9142);-webkit-text-stroke:0.16px #0a0a0a;">...</span>
<div class="b" style="left:693.25px;top:492.25px;width:20.25px;height:20.25px;background:#e1e1e1;border:1px solid #adadad;box-sizing:border-box;"></div>
<svg class="b" style="left:695px;top:494px;" width="16" height="16" viewBox="0 0 16 16"><path d="M1.7 14.6L3.2 13.2" stroke="#8a6a30" stroke-width="1.8" stroke-linecap="round"/><path d="M3 13.4L14.2 2.5" stroke="#1d5c1d" stroke-width="3.1" stroke-linecap="round"/><path d="M3.1 13.3L12.2 4.45" stroke="#12a012" stroke-width="2.1"/><path d="M12.2 4.45L13.1 3.55" stroke="#e8e8e8" stroke-width="2.1"/><path d="M13.1 3.55L14.1 2.6" stroke="#e04a4a" stroke-width="2.1" stroke-linecap="round"/></svg>
<span class="t" style="left:438px;top:524px;font-size:10.5px;color:#0a0a0a;transform:scaleX(0.9652);-webkit-text-stroke:0.16px #0a0a0a;">Color mask</span>
<div class="b" style="left:505px;top:523.75px;width:11.25px;height:11.25px;background:#fff;border:1px solid #333;box-sizing:border-box;"></div>
<div class="b" style="left:523.75px;top:520.5px;width:80px;height:18.75px;background:#f0f0f0;"></div>
<div class="b" style="left:523.75px;top:520.5px;width:68.75px;height:18.75px;background:#ebebeb;border:1px solid #c4c4c4;box-sizing:border-box;"></div>
<svg class="b" style="left:595.25px;top:528px;" width="6" height="4" viewBox="0 0 6 4"><path d="M0.4 0.7H5.6L3 3.4Z" fill="#333"/></svg>
<span class="t" style="left:623.75px;top:524px;font-size:10.5px;color:#0a0a0a;transform:scaleX(0.9499);-webkit-text-stroke:0.16px #0a0a0a;">Tolerance</span>
<div class="b" style="left:672px;top:520px;width:40.5px;height:19.25px;background:#f0f0f0;border:1px solid #b2b2b2;box-sizing:border-box;"></div>
<div class="b" style="left:701.25px;top:521px;width:10.25px;height:17.25px;background:#fbfbfb;border-left:1px solid #b8b8b8;box-sizing:border-box;"></div>
<div class="b" style="left:702.25px;top:529.125px;width:9.25px;height:1px;background:#b8b8b8;"></div>
<svg class="b" style="left:701.25px;top:520px;" width="11.25" height="19.25" viewBox="0 0 11.25 19.25"><path d="M3.125 6.5475 L5.925 3.8475 L8.725 6.5475Z M3.125 12.7025 L5.925 15.4025 L8.725 12.7025Z" fill="#404040"/></svg>
<span class="t" style="left:677px;top:524px;font-size:10.5px;color:#80808c;transform:scaleX(0.9390);">0%</span>
<div class="b" style="left:438px;top:550px;width:10.75px;height:10.75px;background:#fff;border:1px solid #333;box-sizing:border-box;"></div>
<svg class="b" style="left:438px;top:550px;" width="10.75" height="10.75" viewBox="0 0 10.75 10.75"><path d="M1.90192 5.62308 L4.13462 7.93846 L8.93077 3.05962" fill="none" stroke="#333" stroke-width="1.075"/></svg>
<span class="t" style="left:451.75px;top:550px;font-size:10.5px;color:#0a0a0a;transform:scaleX(0.9427);-webkit-text-stroke:0.16px #0a0a0a;">Use alpha channel</span>
<svg class="b" style="left:425.6px;top:580.5px;" width="10" height="7" viewBox="0 0 10 7"><path d="M1.2 1.5L4.8 5L8.4 1.5" fill="none" stroke="#222" stroke-width="1.4"/></svg>
<span class="t" style="left:440px;top:579px;font-size:11.5px;color:#0a0a0a;transform:scaleX(1.0484);-webkit-text-stroke:0.08px #0a0a0a;">Mapping</span>
<div class="b" style="left:490.5px;top:584.25px;width:229.5px;height:1px;background:#cfcfcf;"></div>
<span class="t" style="left:468.25px;top:601px;font-size:10.5px;color:#0a0a0a;transform:scaleX(0.9616);-webkit-text-stroke:0.16px #0a0a0a;">Offset</span>
<span class="t" style="left:560.5px;top:601px;font-size:10.5px;color:#0a0a0a;transform:scaleX(0.8860);-webkit-text-stroke:0.16px #0a0a0a;">Repeat</span>
<span class="t" style="left:636.25px;top:601px;font-size:10.5px;color:#0a0a0a;transform:scaleX(0.9716);-webkit-text-stroke:0.16px #0a0a0a;">Rotation</span>
<span class="t" style="left:437px;top:622px;font-size:10.5px;color:#0a0a0a;transform:scaleX(0.8242);-webkit-text-stroke:0.16px #0a0a0a;">U</span>
<span class="t" style="left:437px;top:645px;font-size:10.5px;color:#0a0a0a;transform:scaleX(0.8924);-webkit-text-stroke:0.16px #0a0a0a;">V</span>
<svg class="b" style="left:454px;top:627px;" width="8" height="8" viewBox="0 0 8 8"><path d="M2.2 8V4.4Q2.2 2.6 4 2.6H8" fill="none" stroke="#3a3a3a" stroke-width="3"/><path d="M2.2 8V4.4Q2.2 2.6 4 2.6H8" fill="none" stroke="#e6e6e6" stroke-width="1.1"/></svg>
<svg class="b" style="left:454px;top:641px;" width="8" height="8" viewBox="0 0 8 8"><path d="M2.2 1V4.5Q2.2 6.3 4 6.3H8" fill="none" stroke="#3a3a3a" stroke-width="3"/><path d="M2.2 1V4.5Q2.2 6.3 4 6.3H8" fill="none" stroke="#e6e6e6" stroke-width="1.1"/></svg>
<div class="b" style="left:467.75px;top:617px;width:72.75px;height:19.75px;background:#fff;border:1px solid #b2b2b2;box-sizing:border-box;"></div>
<div class="b" style="left:530.5px;top:618px;width:9px;height:17.75px;background:#fbfbfb;border-left:1px solid #b8b8b8;box-sizing:border-box;"></div>
<div class="b" style="left:531.5px;top:626.375px;width:8px;height:1px;background:#b8b8b8;"></div>
<svg class="b" style="left:530.5px;top:617px;" width="10" height="19.75" viewBox="0 0 10 19.75"><path d="M2.5 6.6825 L5.3 3.9825 L8.1 6.6825Z M2.5 13.0675 L5.3 15.7675 L8.1 13.0675Z" fill="#404040"/></svg>
<span class="t" style="left:472.75px;top:622px;font-size:10.5px;transform:scaleX(0.8906);">0.0</span>
<div class="b" style="left:467.75px;top:640px;width:72.75px;height:19.5px;background:#fff;border:1px solid #b2b2b2;box-sizing:border-box;"></div>
<div class="b" style="left:530.5px;top:641px;width:9px;height:17.5px;background:#fbfbfb;border-left:1px solid #b8b8b8;box-sizing:border-box;"></div>
<div class="b" style="left:531.5px;top:649.25px;width:8px;height:1px;background:#b8b8b8;"></div>
<svg class="b" style="left:530.5px;top:640px;" width="10" height="19.5" viewBox="0 0 10 19.5"><path d="M2.5 6.615 L5.3 3.915 L8.1 6.615Z M2.5 12.885 L5.3 15.585 L8.1 12.885Z" fill="#404040"/></svg>
<span class="t" style="left:472.75px;top:645px;font-size:10.5px;transform:scaleX(0.8906);">0.0</span>
<div class="b" style="left:542.25px;top:617px;width:17px;height:43px;background:#f2f2f2;border-left:1px solid #c8c8c8;border-top:1px solid #dcdcdc;box-sizing:border-box;"></div>
<svg class="b" style="left:546px;top:626.5px;" width="10" height="23.5" viewBox="0 0 10 23.5"><path d="M8 1.8H4.6Q2.4 1.8 2.4 4V19.5Q2.4 21.7 4.6 21.7H8" fill="none" stroke="#555" stroke-width="2.8" stroke-linecap="round"/><path d="M8 1.8H4.6Q2.4 1.8 2.4 4V19.5Q2.4 21.7 4.6 21.7H8" fill="none" stroke="#e4e4e4" stroke-width="1.1" stroke-linecap="round"/></svg>
<div class="b" style="left:560px;top:617px;width:73.25px;height:19.75px;background:#fff;border:1px solid #b2b2b2;box-sizing:border-box;"></div>
<div class="b" style="left:623.25px;top:618px;width:9px;height:17.75px;background:#fbfbfb;border-left:1px solid #b8b8b8;box-sizing:border-box;"></div>
<div class="b" style="left:624.25px;top:626.375px;width:8px;height:1px;background:#b8b8b8;"></div>
<svg class="b" style="left:623.25px;top:617px;" width="10" height="19.75" viewBox="0 0 10 19.75"><path d="M2.5 6.6825 L5.3 3.9825 L8.1 6.6825Z M2.5 13.0675 L5.3 15.7675 L8.1 13.0675Z" fill="#404040"/></svg>
<span class="t" style="left:565.75px;top:622px;font-size:10.5px;transform:scaleX(0.8564);">1.0</span>
<div class="b" style="left:560px;top:640px;width:73.25px;height:19.5px;background:#fff;border:1px solid #b2b2b2;box-sizing:border-box;"></div>
<div class="b" style="left:623.25px;top:641px;width:9px;height:17.5px;background:#fbfbfb;border-left:1px solid #b8b8b8;box-sizing:border-box;"></div>
<div class="b" style="left:624.25px;top:649.25px;width:8px;height:1px;background:#b8b8b8;"></div>
<svg class="b" style="left:623.25px;top:640px;" width="10" height="19.5" viewBox="0 0 10 19.5"><path d="M2.5 6.615 L5.3 3.915 L8.1 6.615Z M2.5 12.885 L5.3 15.585 L8.1 12.885Z" fill="#404040"/></svg>
<span class="t" style="left:565.75px;top:645px;font-size:10.5px;transform:scaleX(0.8564);">1.0</span>
<div class="b" style="left:636.25px;top:617px;width:82.25px;height:19.75px;background:#fff;border:1px solid #b2b2b2;box-sizing:border-box;"></div>
<div class="b" style="left:708px;top:618px;width:9.5px;height:17.75px;background:#fbfbfb;border-left:1px solid #b8b8b8;box-sizing:border-box;"></div>
<div class="b" style="left:709px;top:626.375px;width:8.5px;height:1px;background:#b8b8b8;"></div>
<svg class="b" style="left:708px;top:617px;" width="10.5" height="19.75" viewBox="0 0 10.5 19.75"><path d="M2.75 6.6825 L5.55 3.9825 L8.35 6.6825Z M2.75 13.0675 L5.55 15.7675 L8.35 13.0675Z" fill="#404040"/></svg>
<span class="t" style="left:641.25px;top:622px;font-size:10.5px;transform:scaleX(0.9024);">310.0°</span>
<div class="b" style="left:636.25px;top:644.5px;width:10.75px;height:10.75px;background:#fff;border:1px solid #333;box-sizing:border-box;"></div>
<span class="t" style="left:650px;top:645px;font-size:10.5px;color:#0a0a0a;transform:scaleX(0.9596);-webkit-text-stroke:0.16px #0a0a0a;">No repeat</span>
<div class="b" style="left:436.25px;top:672.5px;width:11px;height:11px;background:#fff;border:1px solid #333;border-radius:50%;box-sizing:border-box;"></div>
<span class="t" style="left:450px;top:672px;font-size:10.5px;color:#0a0a0a;transform:scaleX(0.9874);-webkit-text-stroke:0.16px #0a0a0a;">Environment map</span>
<div class="b" style="left:436.25px;top:690.25px;width:11px;height:11px;background:#fff;border:1px solid #333;border-radius:50%;box-sizing:border-box;"></div>
<span class="t" style="left:450px;top:691px;font-size:10.5px;color:#0a0a0a;transform:scaleX(0.8867);-webkit-text-stroke:0.16px #0a0a0a;">Screen</span>
<div class="b" style="left:436.25px;top:707.5px;width:11px;height:11px;background:#fff;border:1px solid #333;border-radius:50%;box-sizing:border-box;"></div>
<span class="t" style="left:450px;top:708px;font-size:10.5px;color:#0a0a0a;transform:scaleX(0.8470);-webkit-text-stroke:0.16px #0a0a0a;">WCS</span>
<div class="b" style="left:436.25px;top:725.25px;width:11px;height:11px;background:#fff;border:1px solid #333;border-radius:50%;box-sizing:border-box;"></div>
<span class="t" style="left:450px;top:726px;font-size:10.5px;color:#0a0a0a;transform:scaleX(0.9229);-webkit-text-stroke:0.16px #0a0a0a;">WCS (box style)</span>
<div class="b" style="left:436.25px;top:744px;width:11px;height:11px;background:#fff;border:1px solid #333;border-radius:50%;box-sizing:border-box;"></div>
<div class="b" style="left:438.78px;top:746.53px;width:5.94px;height:5.94px;background:#222;border-radius:50%;"></div>
<span class="t" style="left:450px;top:744px;font-size:10.5px;color:#0a0a0a;transform:scaleX(0.9871);-webkit-text-stroke:0.16px #0a0a0a;">Mapping Channel</span>
<div class="b" style="left:558.75px;top:669.5px;width:155px;height:18.5px;background:#cccccc;border:1px solid #bfbfbf;box-sizing:border-box;"></div>
<span class="t" style="left:562.5px;top:673px;font-size:10.5px;color:#838383;transform:scaleX(1.0013);-webkit-text-stroke:0.16px #838383;">Automatic</span>
<svg class="b" style="left:702px;top:676px;" width="9" height="6" viewBox="0 0 9 6"><path d="M0.6 0.8L4.5 4.8L8.4 0.8" fill="none" stroke="#a0a0a0" stroke-width="1"/></svg>
<div class="b" style="left:564.25px;top:741.25px;width:154px;height:18.75px;background:#fff;border:1px solid #b2b2b2;box-sizing:border-box;"></div>
<div class="b" style="left:708px;top:742.25px;width:9.25px;height:16.75px;background:#fbfbfb;border-left:1px solid #b8b8b8;box-sizing:border-box;"></div>
<div class="b" style="left:709px;top:750.125px;width:8.25px;height:1px;background:#b8b8b8;"></div>
<svg class="b" style="left:708px;top:741.25px;" width="10.25" height="18.75" viewBox="0 0 10.25 18.75"><path d="M2.625 6.4125 L5.425 3.7125 L8.225 6.4125Z M2.625 12.3375 L5.425 15.0375 L8.225 12.3375Z" fill="#404040"/></svg>
<span class="t" style="left:570px;top:746px;font-size:10.5px;">1</span>
<div class="b" style="left:582.5px;top:771.25px;width:10.75px;height:10.75px;background:#fff;border:1px solid #333;box-sizing:border-box;"></div>
<svg class="b" style="left:582.5px;top:771.25px;" width="10.75" height="10.75" viewBox="0 0 10.75 10.75"><path d="M1.90192 5.62308 L4.13462 7.93846 L8.93077 3.05962" fill="none" stroke="#333" stroke-width="1.075"/></svg>
<span class="t" style="left:597px;top:770px;font-size:10.5px;color:#0a0a0a;transform:scaleX(0.9733);-webkit-text-stroke:0.16px #0a0a0a;">Preview local mapping</span>
<div class="b" style="left:595px;top:769.5px;width:105.5px;height:13px;border:1px dotted #333;box-sizing:border-box;"></div>
<div class="b" style="left:583.25px;top:789.25px;width:136.75px;height:20.25px;background:#cccccc;border:1px solid #bfbfbf;box-sizing:border-box;"></div>
<span class="t" style="left:608.75px;top:794px;font-size:10.5px;color:#838383;transform:scaleX(0.9617);-webkit-text-stroke:0.16px #838383;">Display In Viewport</span>
<svg class="b" style="left:427.5px;top:825px;" width="7" height="10" viewBox="0 0 7 10"><path d="M1.5 1.2L5 4.8L1.5 8.4" fill="none" stroke="#777" stroke-width="1.2"/></svg>
<span class="t" style="left:439.5px;top:825px;font-size:11.5px;color:#0a0a0a;transform:scaleX(0.9933);-webkit-text-stroke:0.08px #0a0a0a;">Graph</span>
<div class="b" style="left:476.25px;top:829.25px;width:243.75px;height:1px;background:#cfcfcf;"></div>
<svg class="b" style="left:425.6px;top:852px;" width="10" height="7" viewBox="0 0 10 7"><path d="M1.2 1.5L4.8 5L8.4 1.5" fill="none" stroke="#222" stroke-width="1.4"/></svg>
<span class="t" style="left:440px;top:851px;font-size:11.5px;color:#0a0a0a;transform:scaleX(1.0781);-webkit-text-stroke:0.08px #0a0a0a;">Output Adjustment</span>
<div class="b" style="left:547px;top:855.25px;width:173px;height:1px;background:#cfcfcf;"></div>
<span class="t" style="left:444.25px;top:872px;font-size:10.5px;color:#0a0a0a;transform:scaleX(0.9920);-webkit-text-stroke:0.16px #0a0a0a;">Clamping</span>
<div class="b" style="left:493.25px;top:877.75px;width:218.5px;height:1px;background:#cfcfcf;"></div>
<div class="b" style="left:443.75px;top:891.25px;width:11.25px;height:11.25px;background:#fff;border:1px solid #333;box-sizing:border-box;"></div>
<span class="t" style="left:458px;top:892px;font-size:10.5px;color:#0a0a0a;transform:scaleX(0.9558);-webkit-text-stroke:0.16px #0a0a0a;">Clamp</span>
<div class="b" style="left:586.25px;top:891.25px;width:10.75px;height:10.75px;background:#fff;border:1px solid #bcbcbc;box-sizing:border-box;"></div>
<span class="t" style="left:600px;top:892px;font-size:10.5px;color:#8a8a8a;transform:scaleX(0.9580);-webkit-text-stroke:0.16px #8a8a8a;">Scale to clamp range</span>
<span class="t" style="left:444.25px;top:916px;font-size:10.5px;color:#8a8a8a;transform:scaleX(1.0082);-webkit-text-stroke:0.16px #8a8a8a;">Min:</span>
<div class="b" style="left:494.5px;top:912px;width:74.75px;height:19.25px;background:#f0f0f0;border:1px solid #b2b2b2;box-sizing:border-box;"></div>
<div class="b" style="left:559.25px;top:913px;width:9px;height:17.25px;background:#fbfbfb;border-left:1px solid #b8b8b8;box-sizing:border-box;"></div>
<div class="b" style="left:560.25px;top:921.125px;width:8px;height:1px;background:#b8b8b8;"></div>
<svg class="b" style="left:559.25px;top:912px;" width="10" height="19.25" viewBox="0 0 10 19.25"><path d="M2.5 6.5475 L5.3 3.8475 L8.1 6.5475Z M2.5 12.7025 L5.3 15.4025 L8.1 12.7025Z" fill="#404040"/></svg>
<span class="t" style="left:500px;top:916px;font-size:10.5px;color:#80808c;transform:scaleX(0.8906);">0.0</span>
<span class="t" style="left:586.25px;top:916px;font-size:10.5px;color:#8a8a8a;transform:scaleX(0.9119);-webkit-text-stroke:0.16px #8a8a8a;">Max:</span>
<div class="b" style="left:638.25px;top:912px;width:74.25px;height:19.25px;background:#f0f0f0;border:1px solid #b2b2b2;box-sizing:border-box;"></div>
<div class="b" style="left:702px;top:913px;width:9.5px;height:17.25px;background:#fbfbfb;border-left:1px solid #b8b8b8;box-sizing:border-box;"></div>
<div class="b" style="left:703px;top:921.125px;width:8.5px;height:1px;background:#b8b8b8;"></div>
<svg class="b" style="left:702px;top:912px;" width="10.5" height="19.25" viewBox="0 0 10.5 19.25"><path d="M2.75 6.5475 L5.55 3.8475 L8.35 6.5475Z M2.75 12.7025 L5.55 15.4025 L8.35 12.7025Z" fill="#404040"/></svg>
<span class="t" style="left:643.75px;top:916px;font-size:10.5px;color:#80808c;transform:scaleX(0.8564);">1.0</span>
<span class="t" style="left:444.25px;top:947px;font-size:10.5px;color:#0a0a0a;transform:scaleX(0.9859);-webkit-text-stroke:0.16px #0a0a0a;">Color adjustment</span>
<div class="b" style="left:527.5px;top:953.5px;width:184.25px;height:1px;background:#cfcfcf;"></div>
<div class="b" style="left:443.75px;top:971.75px;width:11.25px;height:11.25px;background:#fff;border:1px solid #333;box-sizing:border-box;"></div>
<span class="t" style="left:458px;top:972px;font-size:10.5px;color:#0a0a0a;transform:scaleX(0.9330);-webkit-text-stroke:0.16px #0a0a0a;">Invert</span>
<div class="b" style="left:494.5px;top:971.75px;width:11px;height:11px;background:#fff;border:1px solid #333;box-sizing:border-box;"></div>
<span class="t" style="left:508.75px;top:972px;font-size:10.5px;color:#0a0a0a;transform:scaleX(0.8992);-webkit-text-stroke:0.16px #0a0a0a;">Grayscale</span>
<span class="t" style="left:586.25px;top:972px;font-size:10.5px;color:#0a0a0a;transform:scaleX(0.9501);-webkit-text-stroke:0.16px #0a0a0a;">Gamma:</span>
<div class="b" style="left:638.25px;top:968.25px;width:74.25px;height:19.25px;background:#fff;border:1px solid #b2b2b2;box-sizing:border-box;"></div>
<div class="b" style="left:702px;top:969.25px;width:9.5px;height:17.25px;background:#fbfbfb;border-left:1px solid #b8b8b8;box-sizing:border-box;"></div>
<div class="b" style="left:703px;top:977.375px;width:8.5px;height:1px;background:#b8b8b8;"></div>
<svg class="b" style="left:702px;top:968.25px;" width="10.5" height="19.25" viewBox="0 0 10.5 19.25"><path d="M2.75 6.5475 L5.55 3.8475 L8.35 6.5475Z M2.75 12.7025 L5.55 15.4025 L8.35 12.7025Z" fill="#404040"/></svg>
<span class="t" style="left:643.75px;top:972px;font-size:10.5px;transform:scaleX(0.8564);">1.0</span>
<span class="t" style="left:444.25px;top:998px;font-size:10.5px;color:#0a0a0a;transform:scaleX(1.0183);-webkit-text-stroke:0.16px #0a0a0a;">Multiplier:</span>
<div class="b" style="left:494.5px;top:994.25px;width:74.75px;height:19px;background:#fff;border:1px solid #b2b2b2;box-sizing:border-box;"></div>
<div class="b" style="left:559.25px;top:995.25px;width:9px;height:17px;background:#fbfbfb;border-left:1px solid #b8b8b8;box-sizing:border-box;"></div>
<div class="b" style="left:560.25px;top:1003.25px;width:8px;height:1px;background:#b8b8b8;"></div>
<svg class="b" style="left:559.25px;top:994.25px;" width="10" height="19" viewBox="0 0 10 19"><path d="M2.5 6.48 L5.3 3.78 L8.1 6.48Z M2.5 12.52 L5.3 15.22 L8.1 12.52Z" fill="#404040"/></svg>
<span class="t" style="left:500px;top:998px;font-size:10.5px;transform:scaleX(0.8564);">1.0</span>
<span class="t" style="left:586.25px;top:998px;font-size:10.5px;color:#0a0a0a;transform:scaleX(0.9165);-webkit-text-stroke:0.16px #0a0a0a;">Gain:</span>
<div class="b" style="left:638.25px;top:994.25px;width:74.25px;height:19px;background:#fff;border:1px solid #b2b2b2;box-sizing:border-box;"></div>
<div class="b" style="left:702px;top:995.25px;width:9.5px;height:17px;background:#fbfbfb;border-left:1px solid #b8b8b8;box-sizing:border-box;"></div>
<div class="b" style="left:703px;top:1003.25px;width:8.5px;height:1px;background:#b8b8b8;"></div>
<svg class="b" style="left:702px;top:994.25px;" width="10.5" height="19" viewBox="0 0 10.5 19"><path d="M2.75 6.48 L5.55 3.78 L8.35 6.48Z M2.75 12.52 L5.55 15.22 L8.35 12.52Z" fill="#404040"/></svg>
<span class="t" style="left:643.75px;top:998px;font-size:10.5px;transform:scaleX(0.8906);">0.5</span>
<span class="t" style="left:444.25px;top:1024px;font-size:10.5px;color:#0a0a0a;transform:scaleX(0.9403);-webkit-text-stroke:0.16px #0a0a0a;">Saturation:</span>
<div class="b" style="left:494.5px;top:1020px;width:74.75px;height:19.25px;background:#fff;border:1px solid #b2b2b2;box-sizing:border-box;"></div>
<div class="b" style="left:559.25px;top:1021px;width:9px;height:17.25px;background:#fbfbfb;border-left:1px solid #b8b8b8;box-sizing:border-box;"></div>
<div class="b" style="left:560.25px;top:1029.12px;width:8px;height:1px;background:#b8b8b8;"></div>
<svg class="b" style="left:559.25px;top:1020px;" width="10" height="19.25" viewBox="0 0 10 19.25"><path d="M2.5 6.5475 L5.3 3.8475 L8.1 6.5475Z M2.5 12.7025 L5.3 15.4025 L8.1 12.7025Z" fill="#404040"/></svg>
<span class="t" style="left:500px;top:1024px;font-size:10.5px;transform:scaleX(0.8564);">1.0</span>
<span class="t" style="left:586.25px;top:1024px;font-size:10.5px;color:#0a0a0a;transform:scaleX(0.9695);-webkit-text-stroke:0.16px #0a0a0a;">Hue shift:</span>
<div class="b" style="left:638.25px;top:1020px;width:74.25px;height:19.25px;background:#fff;border:1px solid #b2b2b2;box-sizing:border-box;"></div>
<div class="b" style="left:702px;top:1021px;width:9.5px;height:17.25px;background:#fbfbfb;border-left:1px solid #b8b8b8;box-sizing:border-box;"></div>
<div class="b" style="left:703px;top:1029.12px;width:8.5px;height:1px;background:#b8b8b8;"></div>
<svg class="b" style="left:702px;top:1020px;" width="10.5" height="19.25" viewBox="0 0 10.5 19.25"><path d="M2.75 6.5475 L5.55 3.8475 L8.35 6.5475Z M2.75 12.7025 L5.55 15.4025 L8.35 12.7025Z" fill="#404040"/></svg>
<span class="t" style="left:643.75px;top:1024px;font-size:10.5px;transform:scaleX(0.9045);">0.0°</span>
<svg class="b" style="left:427.5px;top:1057.5px;" width="7" height="10" viewBox="0 0 7 10"><path d="M1.5 1.2L5 4.8L1.5 8.4" fill="none" stroke="#777" stroke-width="1.2"/></svg>
<span class="t" style="left:439.5px;top:1057px;font-size:11.5px;color:#0a0a0a;transform:scaleX(1.0152);-webkit-text-stroke:0.08px #0a0a0a;">Notes</span>
<div class="b" style="left:474.5px;top:1062.25px;width:245.5px;height:1px;background:#cfcfcf;"></div>
<div class="b" style="left:422px;top:576px;width:304.25px;height:92px;border:3px solid #ef9605;box-sizing:border-box;"></div>
<div class="b" style="left:418.75px;top:737px;width:310.5px;height:27px;border:3px solid #ef9605;box-sizing:border-box;"></div>
<div class="b" style="left:418.25px;top:845px;width:311px;height:203px;border:3px solid #ef9605;box-sizing:border-box;"></div>
<div class="b" style="left:493.75px;top:1081.75px;width:68.75px;height:20.25px;background:#e1e1e1;border:1.6px solid #0078d7;box-sizing:border-box;"></div>
<span class="t" style="left:521.75px;top:1086px;font-size:11.5px;color:#0a0a0a;transform:scaleX(0.7974);-webkit-text-stroke:0.08px #0a0a0a;">OK</span>
<div class="b" style="left:568.75px;top:1081.75px;width:68.75px;height:20.25px;background:#e1e1e1;border:1px solid #adadad;box-sizing:border-box;"></div>
<span class="t" style="left:587.5px;top:1086px;font-size:11.5px;color:#0a0a0a;transform:scaleX(0.8729);-webkit-text-stroke:0.08px #0a0a0a;">Cancel</span>
<div class="b" style="left:644.5px;top:1081.75px;width:69px;height:20.25px;background:#e1e1e1;border:1px solid #adadad;box-sizing:border-box;"></div>
<span class="t" style="left:667.5px;top:1086px;font-size:11.5px;color:#0a0a0a;transform:scaleX(0.9196);-webkit-text-stroke:0.08px #0a0a0a;">Help</span>
<div class="b" style="left:420px;top:1107.5px;width:320.5px;height:1px;background:#fafafa;"></div>
<span class="t" style="left:420.5px;top:1112px;font-size:10.5px;color:#0a0a0a;transform:scaleX(0.9740);-webkit-text-stroke:0.16px #0a0a0a;">Bitmap texture is an image file</span>
<div class="b" style="left:726.25px;top:1110px;width:1px;height:15px;background:#d4d4d4;"></div>
<svg class="b" style="left:731.5px;top:1117px;" width="9" height="9" viewBox="0 0 9 9"><path d="M6 0.5h1.6v1.6h-1.6zM6 3.3h1.6v1.6h-1.6zM3.2 3.3h1.6v1.6h-1.6zM6 6.1h1.6v1.6h-1.6zM3.2 6.1h1.6v1.6h-1.6zM0.4 6.1h1.6v1.6h-1.6z" fill="#c0c0c0"/></svg>
</div>
</body></html>
